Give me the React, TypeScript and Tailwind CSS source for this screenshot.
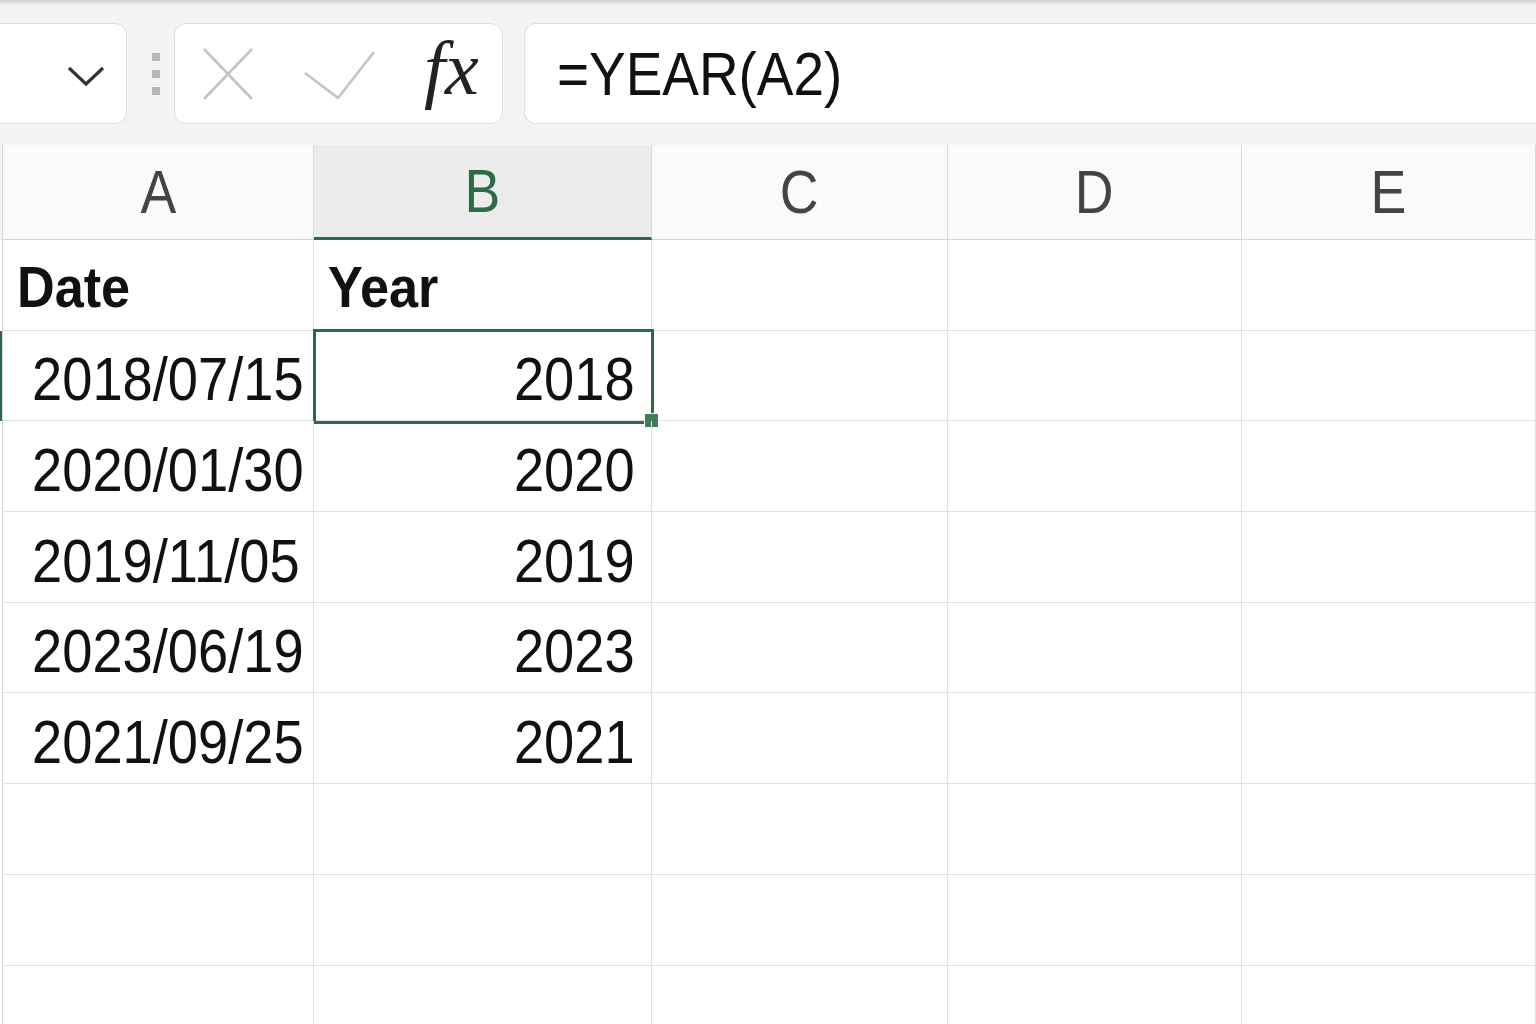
import React from 'react';

const cols = [
  { key: 'A', width: 'w-[311px]' },
  { key: 'B', width: 'w-[338px]' },
  { key: 'C', width: 'w-[296px]' },
  { key: 'D', width: 'w-[294px]' },
  { key: 'E', width: 'flex-1' },
];

const rows: [string, string][] = [
  ['2018/07/15', '2018'],
  ['2020/01/30', '2020'],
  ['2019/11/05', '2019'],
  ['2023/06/19', '2023'],
  ['2021/09/25', '2021'],
  ['', ''],
  ['', ''],
  ['', ''],
];

const cellFont = { fontFamily: '"Liberation Sans", Arial, sans-serif' };

function Toolbar() {
  return (
    <div className="relative h-[143px] bg-[#f4f4f4] flex items-start pt-[23px]">
      <div className="absolute top-0 left-0 right-0 h-[6px] bg-gradient-to-b from-[#cfcfcf] to-[#f4f4f4]" />
      {/* name box */}
      <div className="h-[101px] w-[127px] bg-white border border-l-0 border-[#dedede] rounded-r-[12px] flex items-center justify-end pr-[21px]">
        <svg width="38" height="24" viewBox="0 0 38 24" className="mt-[4px]">
          <path d="M2 4 L19 20 L36 4" fill="none" stroke="#333" strokeWidth="3.2" />
        </svg>
      </div>
      {/* grip */}
      <div className="w-[47px] h-[101px] flex flex-col items-center justify-center gap-[9px] pl-[10px]">
        <div className="w-[8px] h-[8px] bg-[#b8b8b8]" />
        <div className="w-[8px] h-[8px] bg-[#b8b8b8]" />
        <div className="w-[8px] h-[8px] bg-[#b8b8b8]" />
      </div>
      {/* cancel / enter / fx */}
      <div className="h-[101px] w-[329px] bg-white border border-[#dedede] rounded-[12px] relative">
        <svg className="absolute left-[28px] top-[24px]" width="50" height="52" viewBox="0 0 50 52">
          <path d="M1 1 L49 51 M49 1 L1 51" fill="none" stroke="#c4c4c4" strokeWidth="2.6" />
        </svg>
        <svg className="absolute left-[129px] top-[27px]" width="72" height="50" viewBox="0 0 72 50">
          <path d="M1 22 L34 47 L70 1" fill="none" stroke="#c4c4c4" strokeWidth="2.6" />
        </svg>
        <span
          className="absolute left-[249px] top-[6px] text-[76px] italic leading-none text-[#222]"
          style={{ fontFamily: '"Liberation Serif", "Times New Roman", serif' }}
        >
          fx
        </span>
      </div>
      {/* formula */}
      <div className="ml-[21px] h-[101px] flex-1 bg-white border border-r-0 border-[#dedede] rounded-l-[12px] flex items-center pl-[32px]">
        <span className="inline-block origin-left scale-x-[0.9] text-[61px] leading-none text-[#111] pt-[2px]" style={cellFont}>
          =YEAR(A2)
        </span>
      </div>
    </div>
  );
}

function HeaderRow() {
  return (
    <div className="flex h-[97px] bg-[#f4f4f4]">
      <div className="w-[3px] border-r border-[#d6d6d6]" />
      {cols.map((c) => {
        const selected = c.key === 'B';
        return (
          <div
            key={c.key}
            className={`${c.width} flex items-center justify-center border-r border-[#dadada] mt-[2px] ${
              selected
                ? 'bg-[#ececec] border-b-[3px] border-b-[#2d6a47] text-[#2d6a47]'
                : 'bg-[#fafafa] border-b border-b-[#d4d4d4] text-[#444]'
            }`}
          >
            <span className="inline-block scale-x-[0.88] text-[61px] leading-none" style={cellFont}>
              {c.key}
            </span>
          </div>
        );
      })}
    </div>
  );
}

function Cell({ width, children, right, bold }: { width: string; children?: React.ReactNode; right?: boolean; bold?: boolean }) {
  return (
    <div
      className={`${width} h-full border-r border-b border-[#e2e2e2] flex items-end ${
        bold ? 'pb-[14px]' : 'pb-[10px]'
      } ${right ? 'justify-end pr-[16px]' : bold ? 'pl-[14px]' : 'pl-[29px]'}`}
    >
      <span
        className={`inline-block leading-none text-[#111] ${right ? 'origin-right' : 'origin-left'} ${
          bold ? 'font-bold text-[58px] scale-x-[0.9]' : 'text-[61px] scale-x-[0.89]'
        }`}
        style={cellFont}
      >
        {children}
      </span>
    </div>
  );
}

export default function App() {
  return (
    <div className="w-[1536px] h-[1024px] overflow-hidden bg-white">
      <Toolbar />
      <HeaderRow />
      <div className="flex h-[90.7px]">
        <div className="w-[3px] border-r border-[#d6d6d6]" />
        <Cell width="w-[311px]" bold>Date</Cell>
        <Cell width="w-[338px]" bold>Year</Cell>
        <Cell width="w-[296px]" />
        <Cell width="w-[294px]" />
        <Cell width="flex-1" />
      </div>
      {rows.map((r, i) => (
        <div key={i} className="flex h-[90.7px] relative">
          <div className={`w-[3px] border-r border-[#d6d6d6] ${i === 0 ? 'bg-[#2d6a47]' : ''}`} />
          <Cell width="w-[311px]">{r[0]}</Cell>
          <Cell width="w-[338px]" right>{r[1]}</Cell>
          <Cell width="w-[296px]" />
          <Cell width="w-[294px]" />
          <Cell width="flex-1" />
          {i === 0 && (
            <>
              <div className="absolute left-[313px] top-[-2px] w-[341px] h-[95px] border-[3px] border-[#2d6a47] pointer-events-none" />
              <div className="absolute left-[644px] top-[82px] w-[15px] h-[15px] bg-[#3f7d5b] border border-white" />
            </>
          )}
        </div>
      ))}
    </div>
  );
}
